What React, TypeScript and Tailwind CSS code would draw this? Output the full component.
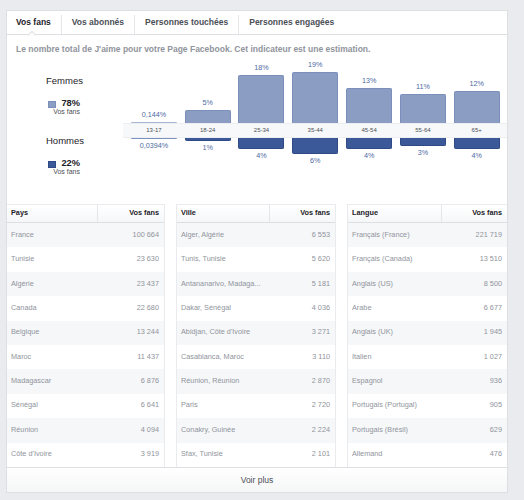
import React from 'react';

const ages = ['13-17', '18-24', '25-34', '35-44', '45-54', '55-64', '65+'];
const women = [
  { v: 0.144, label: '0,144%' },
  { v: 5, label: '5%' },
  { v: 18, label: '18%' },
  { v: 19, label: '19%' },
  { v: 13, label: '13%' },
  { v: 11, label: '11%' },
  { v: 12, label: '12%' },
];
const men = [
  { v: 0.0394, label: '0,0394%' },
  { v: 1, label: '1%' },
  { v: 4, label: '4%' },
  { v: 6, label: '6%' },
  { v: 4, label: '4%' },
  { v: 3, label: '3%' },
  { v: 4, label: '4%' },
];

const SCALE = 2.66;

const tables: { title: string; rows: [string, string][] }[] = [
  {
    title: 'Pays',
    rows: [
      ['France', '100 664'],
      ['Tunisie', '23 630'],
      ['Algérie', '23 437'],
      ['Canada', '22 680'],
      ['Belgique', '13 244'],
      ['Maroc', '11 437'],
      ['Madagascar', '6 876'],
      ['Sénégal', '6 641'],
      ['Réunion', '4 094'],
      ["Côte d'Ivoire", '3 919'],
    ],
  },
  {
    title: 'Ville',
    rows: [
      ['Alger, Algérie', '6 553'],
      ['Tunis, Tunisie', '5 620'],
      ['Antananarivo, Madaga...', '5 181'],
      ['Dakar, Sénégal', '4 036'],
      ["Abidjan, Côte d'Ivoire", '3 271'],
      ['Casablanca, Maroc', '3 110'],
      ['Réunion, Réunion', '2 870'],
      ['Paris', '2 720'],
      ['Conakry, Guinée', '2 224'],
      ['Sfax, Tunisie', '2 101'],
    ],
  },
  {
    title: 'Langue',
    rows: [
      ['Français (France)', '221 719'],
      ['Français (Canada)', '13 510'],
      ['Anglais (US)', '8 500'],
      ['Arabe', '6 677'],
      ['Anglais (UK)', '1 945'],
      ['Italien', '1 027'],
      ['Espagnol', '936'],
      ['Portugais (Portugal)', '905'],
      ['Portugais (Brésil)', '629'],
      ['Allemand', '476'],
    ],
  },
];

function Tab({ label, active }: { label: string; active?: boolean }) {
  return (
    <div
      className={`relative flex items-center px-[10px] font-bold text-[8.5px] ${
        active ? 'pl-[9px] text-[#1d2129]' : 'text-[#4b4f56]'
      }`}
    >
      {label}
      {active && (
        <div className="absolute bottom-[-4px] left-[22px] h-[6px] w-[6px] rotate-45 border-l border-t border-[#dddfe2] bg-white" />
      )}
    </div>
  );
}

function Sep() {
  return <div className="h-[19px] w-px self-end bg-[#e5e6e9]" />;
}

function Legend({ title, pct, color }: { title: string; pct: string; color: string }) {
  return (
    <div>
      <div className="pl-[39px] text-[9.5px] leading-[12px] text-[#1d2129]">{title}</div>
      <div className="mt-[11px] flex pl-[41px]">
        <div className={`mt-[3px] h-[7px] w-[8px] shrink-0 border ${color}`} />
        <div className="flex w-[24px] flex-col items-end">
          <div className="text-[9.3px] font-bold leading-[10px] text-[#1d2129]">{pct}</div>
          <div className="whitespace-nowrap text-[7px] leading-[8px] text-[#4b4f56]">Vos fans</div>
        </div>
      </div>
    </div>
  );
}

function Chart() {
  return (
    <div className="flex h-[150px]">
      <div className="w-[116px] shrink-0 pt-[21px]">
        <Legend title="Femmes" pct="78%" color="bg-[#8b9dc3] border-[#7b8fbb]" />
        <div className="mt-[19px]">
          <Legend title="Hommes" pct="22%" color="bg-[#3b5998] border-[#2f4a85]" />
        </div>
      </div>
      <div className="flex-1">
        <div className="flex h-[69px] pl-[4px]">
          {women.map((d, i) => (
            <div key={i} className="flex w-[53.8px] flex-col items-center justify-end">
              <div className="mb-[3px] text-[7.2px] leading-[8px] text-[#4e69a2]">{d.label}</div>
              <div
                className={`w-[46px] rounded-t-[2px] bg-[#8b9dc3] ${
                  d.v < 1 ? 'bg-[#a9b6d3]' : 'border border-b-0 border-[#7b8fbb]'
                }`}
                style={{ height: Math.max(1, d.v * SCALE) }}
              />
            </div>
          ))}
        </div>
        <div className="flex h-[15px] border-y border-[#eceef1] bg-[#f7f8fa] pl-[4px]">
          {ages.map((a) => (
            <div key={a} className="flex w-[53.8px] items-center justify-center text-[6px] text-[#4b4f56]">
              {a}
            </div>
          ))}
        </div>
        <div className="flex pl-[4px]">
          {men.map((d, i) => (
            <div key={i} className="flex w-[53.8px] flex-col items-center">
              <div
                className={`w-[46px] rounded-b-[2px] ${
                  d.v < 1 ? 'bg-[#7d93bf]' : 'border border-t-0 border-[#2f4a85] bg-[#3b5998]'
                }`}
                style={{ height: Math.max(1, d.v * SCALE) }}
              />
              <div className="mt-[3px] text-[7.2px] leading-[8px] text-[#4e69a2]">{d.label}</div>
            </div>
          ))}
        </div>
      </div>
    </div>
  );
}

function Table({ title, rows, cls, head }: { title: string; rows: [string, string][]; cls: string; head: string }) {
  return (
    <div className={`border-t border-[#e9ebee] ${cls}`}>
      <div className="flex h-[18px] border-b border-[#dddfe2] bg-gradient-to-b from-white to-[#f6f7f9] text-[7.3px] font-bold text-[#1d2129]">
        <div className={`flex items-center border-r border-[#e5e6e9] pl-[4px] ${head}`}>{title}</div>
        <div className="flex flex-1 items-center justify-end pr-[5px]">Vos fans</div>
      </div>
      {rows.map(([n, v], i) => (
        <div
          key={n}
          className={`flex h-[24.4px] items-center justify-between pl-[4px] pr-[5px] text-[7.3px] text-[#90949c] ${
            i % 2 === 0 ? 'bg-[#f6f7f9]' : 'bg-white'
          }`}
        >
          <span className="whitespace-nowrap">{n}</span>
          <span className="whitespace-nowrap">{v}</span>
        </div>
      ))}
    </div>
  );
}

export default function App() {
  return (
    <div className="h-[500px] w-[524px] bg-[#e9ebee] pl-[6px] pt-[10px] font-['Liberation_Sans',Arial,Helvetica,sans-serif]">
      <div className="w-[502px] border border-[#dddfe2] bg-white">
        <div className="flex h-[24px] border-b border-[#dddfe2]">
          <Tab label="Vos fans" active />
          <Sep />
          <Tab label="Vos abonnés" />
          <Sep />
          <Tab label="Personnes touchées" />
          <Sep />
          <Tab label="Personnes engagées" />
        </div>
        <div className="pl-[9px] pt-[9px] text-[8.5px] font-bold leading-[10px] text-[#90949c]">
          Le nombre total de J'aime pour votre Page Facebook. Cet indicateur est une estimation.
        </div>
        <Chart />
        <div className="flex gap-[11px]">
          <Table {...tables[0]} cls="w-[158px] border-r border-r-[#e9ebee]" head="w-[91px]" />
          <Table {...tables[1]} cls="w-[160px] border-x border-x-[#e9ebee]" head="w-[93px]" />
          <Table {...tables[2]} cls="flex-1 border-l border-l-[#e9ebee]" head="w-[94px]" />
        </div>
        <div className="flex h-[25px] items-center justify-center border-t border-[#dddfe2] bg-gradient-to-b from-white to-[#f5f6f7] text-[8.5px] text-[#4b4f56]">
          Voir plus
        </div>
      </div>
    </div>
  );
}
